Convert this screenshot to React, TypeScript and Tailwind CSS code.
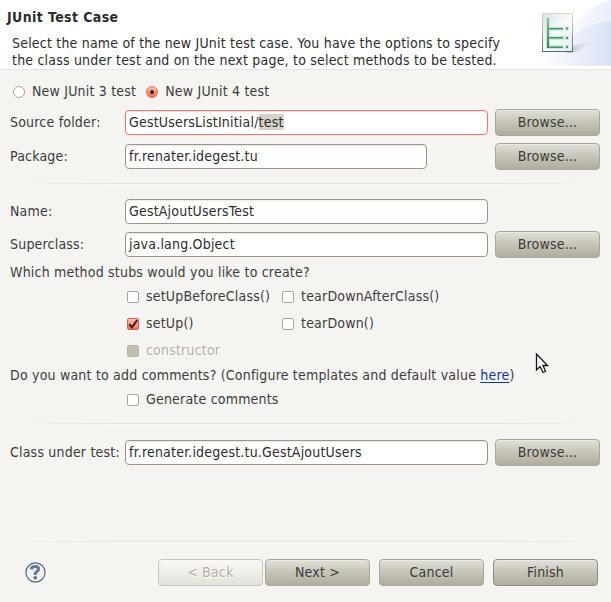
import type { ReactNode } from "react";

function Label({ children, className = "" }: { children: ReactNode; className?: string }) {
  return <span className={`pb-[2px] whitespace-pre leading-[18px] ${className}`}>{children}</span>;
}

function Field({ children, width = "w-[363px]", border = "border-[#a09480]" }: { children: ReactNode; width?: string; border?: string }) {
  return (
    <div className={`flex h-[25px] shrink-0 items-center rounded-[4px] border bg-white pl-[3px] text-[#2c2c2c] shadow-[inset_0_1px_0_#eeeae7] ${width} ${border}`}>
      <Label>{children}</Label>
    </div>
  );
}

function Button({ children, disabled = false, strong = false, className = "" }: { children: ReactNode; disabled?: boolean; strong?: boolean; className?: string }) {
  const look = disabled
    ? "border-[#c8c6ba] bg-linear-to-b from-[#f9f8f6] to-[#e5e2db] text-[#b8ada0] [text-shadow:1px_1px_0_#fff]"
    : `${strong ? "border-[#8f8e80]" : "border-[#a9a799]"} bg-linear-to-b from-[#e1e1d9] via-[#c6c3b7] to-[#b1ac9d] text-[#3c3c3c] shadow-[inset_0_1px_0_#e9e8e1]`;
  return (
    <button className={`flex h-[27px] w-[105px] shrink-0 items-center justify-center rounded-[4px] border tracking-[0.2px] ${look} ${className}`}>
      <Label>{children}</Label>
    </button>
  );
}

function FormRow({ label, children, button = false, className = "" }: { label: string; children: ReactNode; button?: boolean; className?: string }) {
  return (
    <div className={`flex h-[27px] items-center pl-[10px] ${className}`}>
      <Label className="w-[115px] shrink-0">{label}</Label>
      {children}
      {button && <Button className="mr-[11px] ml-auto">Browse...</Button>}
    </div>
  );
}

function Check({ label, state = "off", className = "" }: { label: string; state?: "off" | "on" | "disabled"; className?: string }) {
  const box =
    state === "on"
      ? "border-[#d8604c] bg-linear-to-b from-[#fbc4b9] to-[#f76a50]"
      : state === "disabled"
        ? "border-[#b8b5a8] bg-[#c2bfb2]"
        : "border-[#aaa797] bg-white";
  return (
    <div className={`flex h-5 items-center ${className}`}>
      <span className={`mr-[7px] block size-3 shrink-0 rounded-[2px] border ${box}`}>
        {state === "on" && (
          <svg className="block size-[10px] overflow-visible" viewBox="0 0 10 10">
            <path d="M1.2 5.2 L3.8 8.4 L9.2 1.2" fill="none" stroke="#30201e" strokeWidth="2" />
          </svg>
        )}
      </span>
      <Label className={state === "disabled" ? "text-[#b8ada0] [text-shadow:1px_1px_0_#fff]" : ""}>{label}</Label>
    </div>
  );
}

function Radio({ label, selected = false }: { label: string; selected?: boolean }) {
  return (
    <div className="flex h-5 items-center">
      <span className={`mr-[7px] flex size-3 items-center justify-center rounded-full border ${selected ? "border-[#d96955] bg-linear-to-b from-[#fcc5ba] to-[#f7644a]" : "border-[#aaa797] bg-white"}`}>
        {selected && <span className="size-1 rounded-full bg-[#30201e]" />}
      </span>
      <Label>{label}</Label>
    </div>
  );
}

function Separator({ className = "" }: { className?: string }) {
  return (
    <div className={`mx-[10px] h-[2px] ${className}`}>
      <div className="h-px bg-[linear-gradient(to_right,transparent,#e2e0da_18%,#e2e0da_82%,transparent)]" />
      <div className="h-px bg-[linear-gradient(to_right,transparent,#fcfbfa_18%,#fcfbfa_82%,transparent)]" />
    </div>
  );
}

function WizardArt() {
  return (
    <svg className="block h-[66px] w-[75px]" viewBox="536 0 75 66">
      <defs>
        <linearGradient id="far" x1="0" x2="1"><stop stopColor="#fbfcfe" /><stop offset="1" stopColor="#e9effa" /></linearGradient>
        <linearGradient id="near" x1="0" x2="1"><stop stopColor="#ffffff" /><stop offset=".45" stopColor="#f0f3fb" /><stop offset="1" stopColor="#d9e2f5" /></linearGradient>
        <linearGradient id="paper" x1="0" x2="1" y2="1"><stop stopColor="#d8e0ee" /><stop offset=".5" stopColor="#f8fbfd" /><stop offset="1" stopColor="#e2edf3" /></linearGradient>
        <linearGradient id="edge" x2="0" y2="1"><stop stopColor="#efd0a0" /><stop offset=".5" stopColor="#b3a59b" /><stop offset="1" stopColor="#506a71" /></linearGradient>
        <linearGradient id="shade" x1="0" x2="1"><stop stopColor="#aaa0b0" stopOpacity=".7" /><stop offset="1" stopColor="#d8d5e5" stopOpacity="0" /></linearGradient>
        <linearGradient id="stem" x2="0" y2="1"><stop stopColor="#85c69b" /><stop offset="1" stopColor="#328252" /></linearGradient>
      </defs>
      <path d="M566 66 V42 C574 22 590 4 611 0 V66Z" fill="url(#far)" />
      <path d="M536 66 C556 48 578 24 611 21 V66Z" fill="url(#near)" />
      <path d="M566 53 L573 46 L594 40 Q584 49 573 53Z" fill="url(#shade)" />
      <rect x="542.5" y="13.5" width="30" height="38" fill="url(#paper)" stroke="url(#edge)" />
      <g stroke="#ccebd5" strokeWidth="4" fill="none"><path d="M548 17V47H563M550 28.5H564M550 38H564M565 28.5H569M565 38H569M565 47H569" /></g>
      <rect x="547" y="18" width="2" height="30" fill="url(#stem)" />
      <g fill="#3d9962"><path d="M549 28h14v1.5h-14zM549 37h14v1.5h-14zM549 46.5h14v1.5h-14zM566 27.5h2v2h-2zM566 37h2v2h-2zM566 46h2v2h-2z" /></g>
    </svg>
  );
}

export default function App() {
  return (
    <main className="relative h-[602px] w-[611px] overflow-hidden bg-[#f6f4f1] font-['DejaVu_Sans_Condensed','DejaVu_Sans',sans-serif] text-[14px] tracking-[0.2px] text-[#3c3c3c] [font-stretch:condensed]">
      <header className="flex h-[70px] justify-between border-b border-[#e5e4e1] bg-white text-[#2c2c2c]">
        <div className="pt-2 pl-[7px]">
          <h1 className="leading-[18px] font-bold tracking-[0.4px]">JUnit Test Case</h1>
          <p className="mt-[9px] ml-[5px] leading-[17px] whitespace-nowrap">
            Select the name of the new JUnit test case. You have the options to specify<br />
            the class under test and on the next page, to select methods to be tested.
          </p>
        </div>
        <WizardArt />
      </header>

      <div className="mt-[12px] flex gap-[10px] pl-[13px]">
        <Radio label="New JUnit 3 test" />
        <Radio label="New JUnit 4 test" selected />
      </div>
      <FormRow label="Source folder:" button className="mt-[7px]">
        <Field border="border-[#f9765f]">GestUsersListInitial/<span className="bg-[#d5d2c8]">test</span></Field>
      </FormRow>
      <FormRow label="Package:" button className="mt-[7px]"><Field width="w-[302px]">fr.renater.idegest.tu</Field></FormRow>
      <Separator className="mt-[13px]" />
      <FormRow label="Name:" className="mt-[13px]"><Field>GestAjoutUsersTest</Field></FormRow>
      <FormRow label="Superclass:" button className="mt-[6px]"><Field>java.lang.Object</Field></FormRow>

      <div className="mt-[5px] flex h-5 items-center pl-[10px]"><Label>Which method stubs would you like to create?</Label></div>
      <div className="mt-1 grid grid-cols-[155px_1fr] gap-y-[7px] pl-[127px]">
        <Check label="setUpBeforeClass()" />
        <Check label="tearDownAfterClass()" />
        <Check label="setUp()" state="on" />
        <Check label="tearDown()" />
        <Check label="constructor" state="disabled" />
      </div>
      <div className="mt-[5px] flex h-5 items-center pl-[10px]">
        <Label>Do you want to add comments? (Configure templates and default value <a className="text-[#0b3aa4] underline underline-offset-2">here</a>)</Label>
      </div>
      <Check label="Generate comments" className="mt-1 ml-[127px]" />
      <Separator className="mt-[13px]" />
      <FormRow label="Class under test:" button className="mt-[14px]"><Field>fr.renater.idegest.tu.GestAjoutUsers</Field></FormRow>

      <Separator className="mt-[75px]" />
      <footer className="mt-4 flex h-[27px] items-center pl-[25px]">
        <svg className="mr-[112px] size-[21px] shrink-0" viewBox="0 0 21 21">
          <circle cx="10.5" cy="10.5" r="9.6" fill="#eff0f3" stroke="#536989" strokeWidth="1.2" />
          <path d="M6.2 7.2 Q6.6 4.4 10.3 4.4 Q13.6 4.4 13.6 7 Q13.6 8.5 11.6 9.8 Q10.2 10.7 10.2 12.9" fill="none" stroke="#657896" strokeWidth="3" />
          <circle cx="10.2" cy="15.8" r="1.8" fill="#566b8c" />
        </svg>
        <Button disabled>&lt; Back</Button>
        <Button className="ml-[2px]">Next &gt;</Button>
        <Button className="ml-[9px]">Cancel</Button>
        <Button strong className="ml-[9px]">Finish</Button>
      </footer>

      <svg className="absolute top-[353px] left-[535px] h-[22px] w-[15px]" viewBox="0 0 15 22">
        <path d="M1.5 1 V17 L5 13.5 L8 19.5 L10.5 18.3 L8 12.5 H12.5Z" fill="white" stroke="#151515" strokeWidth="1.3" />
      </svg>
    </main>
  );
}
